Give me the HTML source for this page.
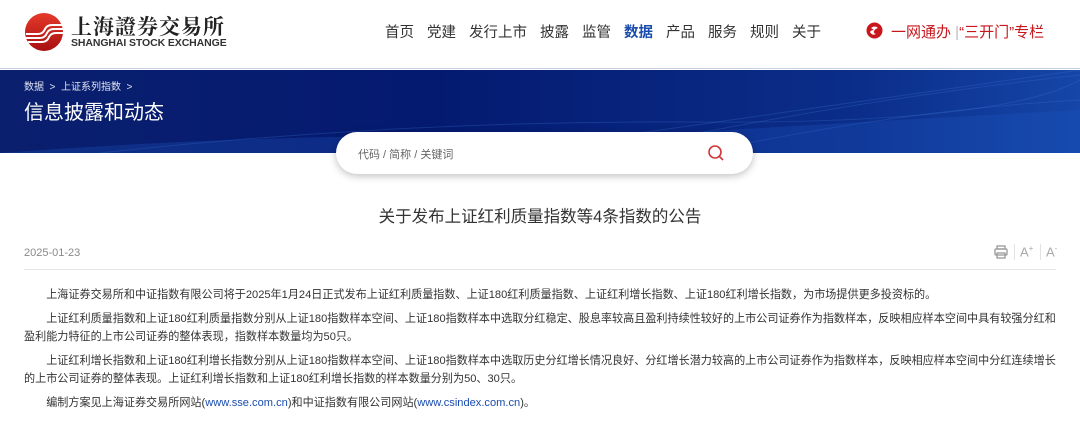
<!DOCTYPE html>
<html><head><meta charset="utf-8">
<style>
*{margin:0;padding:0;box-sizing:border-box}
body{width:1080px;height:436px;overflow:hidden;background:#fff;font-family:"Liberation Sans","Noto Sans CJK SC",sans-serif;color:#333;position:relative}
.hdr{position:absolute;left:0;top:0;width:1080px;height:69px;background:#fff;border-bottom:1px solid #c8cfe0}
.nav{position:absolute;top:21px;left:385px;font-size:14.5px;color:#333;white-space:nowrap}
.nav span{margin-right:13px}
.banner{position:absolute;left:0;top:70px;width:1080px;height:83px;background:linear-gradient(90deg,#0a1f6e 0%,#041a70 40%,#0b2e8a 80%,#1546a8 100%);overflow:hidden}
.crumb{position:absolute;left:24px;top:78px;font-size:10px;color:#dfe4f2}
.btitle{position:absolute;left:24px;top:96px;font-size:20px;color:#fff}
.search{position:absolute;left:336px;top:132px;width:417px;height:42px;background:#fff;border-radius:21px;box-shadow:0 2px 8px rgba(0,0,0,.25)}
.search .ph{position:absolute;left:22px;top:14px;font-size:11px;color:#666}
.title{position:absolute;left:0;width:1080px;top:203px;text-align:center;font-size:16.5px;color:#333}
.date{position:absolute;left:24px;top:247px;font-size:11px;color:#888}
.line{position:absolute;left:24px;top:269px;width:1032px;height:1px;background:#e5e5e5}
.body{position:absolute;left:24px;top:286px;width:1040px;font-size:11.1px;line-height:18px;color:#333;white-space:nowrap}
.body p{margin-bottom:6px}
.body a{color:#1a4cae;text-decoration:none}
</style></head><body>
<div class="hdr">
<svg style="position:absolute;left:24px;top:12px" width="40" height="40" viewBox="0 0 40 40">
<defs><linearGradient id="g" x1="0" y1="0" x2="0" y2="1"><stop offset="0" stop-color="#e53a2a"/><stop offset="1" stop-color="#a81010"/></linearGradient></defs>
<circle cx="20" cy="20" r="19" fill="url(#g)"/>
<path d="M2 22 H14 Q19 22 21 17 Q23 13 28 13 H40 M2 26 H16 Q21 26 23 21 Q25 17 30 17 H40 M4 30 H18 Q23 30 25 25 Q27 21 32 21 H40" stroke="#fff" stroke-width="2" fill="none"/>
</svg>
<div style="position:absolute;left:71px;top:11px;font-size:21px;font-weight:bold;letter-spacing:1px;color:#222;font-family:'Noto Serif CJK SC',serif">上海證券交易所</div>
<div style="position:absolute;left:71px;top:37px;font-size:10.5px;font-weight:bold;color:#333;letter-spacing:-.1px">SHANGHAI STOCK EXCHANGE</div>
<div class="nav"><span>首页</span><span>党建</span><span>发行上市</span><span>披露</span><span>监管</span><span style="color:#1a4cae;font-weight:bold">数据</span><span>产品</span><span>服务</span><span>规则</span><span>关于</span></div>
<svg style="position:absolute;left:866px;top:22px" width="17" height="17" viewBox="0 0 17 17"><circle cx="8.5" cy="8.5" r="8" fill="#c8161d"/><path d="M5 6 Q9 3 12 6 Q9 7 8 9 Q7 11 10 12 Q6 14 4 10 Q5 8 8 8" fill="#fff"/></svg>
<div style="position:absolute;left:891px;top:21px;font-size:15px;color:#c8161d;white-space:nowrap">一网通办 <span style="color:#bbb">|</span>“三开门”专栏</div>
</div>
<div class="banner">
<svg width="1080" height="83" viewBox="0 0 1080 83" style="position:absolute;left:0;top:0">
<g fill="none" stroke="#3a6fd0" stroke-opacity=".3" stroke-width="1">
<path d="M100 83 Q400 50 700 52 T1080 10"/><path d="M500 83 Q800 40 1080 0"/><path d="M600 83 Q850 30 1080 5"/><path d="M700 83 Q900 40 1080 30"/>
</g>
<path d="M0 83 Q300 60 600 68 Q800 55 1080 40 V83 Z" fill="#1e55c0" fill-opacity=".3"/>
</svg>
</div>
<div class="crumb">数据 &nbsp;&gt;&nbsp; 上证系列指数 &nbsp;&gt;</div>
<div class="btitle">信息披露和动态</div>
<div class="search"><div class="ph">代码 / 简称 / 关键词</div>
<svg style="position:absolute;left:371px;top:12px" width="18" height="18" viewBox="0 0 18 18"><circle cx="8" cy="8" r="6" stroke="#d0363a" stroke-width="1.6" fill="none"/><path d="M12.3 12.3 L16 16" stroke="#d0363a" stroke-width="1.6"/></svg></div>
<div class="title">关于发布上证红利质量指数等4条指数的公告</div>
<div class="date">2025-01-23</div>
<svg style="position:absolute;left:994px;top:245px" width="14" height="14" viewBox="0 0 14 14" fill="none" stroke="#999" stroke-width="1.3"><rect x="3" y="1" width="8" height="3"/><rect x="1" y="4" width="12" height="6" rx="1"/><rect x="3" y="8" width="8" height="5"/></svg>
<div style="position:absolute;left:1014px;top:244px;width:1px;height:16px;background:#e3e3e3"></div>
<div style="position:absolute;left:1020px;top:244px;font-size:13px;color:#aaa">A<sup style="font-size:8px">+</sup></div>
<div style="position:absolute;left:1040px;top:244px;width:1px;height:16px;background:#e3e3e3"></div>
<div style="position:absolute;left:1046px;top:244px;font-size:13px;color:#aaa">A<sup style="font-size:8px">-</sup></div>
<div class="line"></div>
<div class="body">
<p>　　上海证券交易所和中证指数有限公司将于2025年1月24日正式发布上证红利质量指数、上证180红利质量指数、上证红利增长指数、上证180红利增长指数，为市场提供更多投资标的。</p>
<p>　　上证红利质量指数和上证180红利质量指数分别从上证180指数样本空间、上证180指数样本中选取分红稳定、股息率较高且盈利持续性较好的上市公司证券作为指数样本，反映相应样本空间中具有较强分红和<br>盈利能力特征的上市公司证券的整体表现，指数样本数量均为50只。</p>
<p>　　上证红利增长指数和上证180红利增长指数分别从上证180指数样本空间、上证180指数样本中选取历史分红增长情况良好、分红增长潜力较高的上市公司证券作为指数样本，反映相应样本空间中分红连续增长<br>的上市公司证券的整体表现。上证红利增长指数和上证180红利增长指数的样本数量分别为50、30只。</p>
<p>　　编制方案见上海证券交易所网站(<a>www.sse.com.cn</a>)和中证指数有限公司网站(<a>www.csindex.com.cn</a>)。</p>
</div>
</body></html>
